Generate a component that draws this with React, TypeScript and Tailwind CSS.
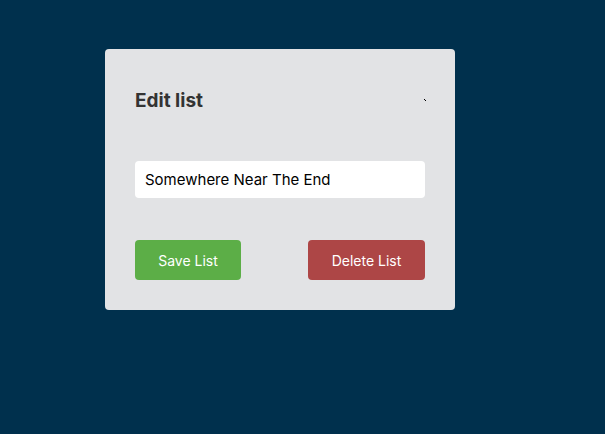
export default function App() {
  return (
    <div className="w-[605px] h-[434px] bg-[#00304d] pt-[49px] pl-[105px]" style={{ fontFamily: "Inter, 'Liberation Sans', sans-serif" }}>
      <div className="w-[350px] h-[261px] bg-[#e2e3e5] rounded-[4px] px-[30px] pt-[40px]">
        <div className="flex items-center justify-between h-[24px]">
          <h2 className="text-[19px] font-bold text-[#333333] leading-[24px]">Edit list</h2>
          <span className="relative w-[3px] h-[3px] -mr-[2px] -mt-[2px]">
            <span className="absolute left-0 top-0 w-[1px] h-[1px] bg-black" />
            <span className="absolute left-[1px] top-[1px] w-[1px] h-[1px] bg-black" />
          </span>
        </div>
        <input
          className="mt-[48px] w-[290px] h-[37px] bg-white rounded-[4px] px-[10px] text-[15px] text-black outline-none"
          defaultValue="Somewhere Near The End"
        />
        <div className="mt-[42px] flex justify-between">
          <button className="w-[106px] h-[40px] bg-[#5cae47] rounded-[4px] text-white text-[14px]">Save List</button>
          <button className="w-[117px] h-[40px] bg-[#ad4646] rounded-[4px] text-white text-[14px]">Delete List</button>
        </div>
      </div>
    </div>
  );
}
